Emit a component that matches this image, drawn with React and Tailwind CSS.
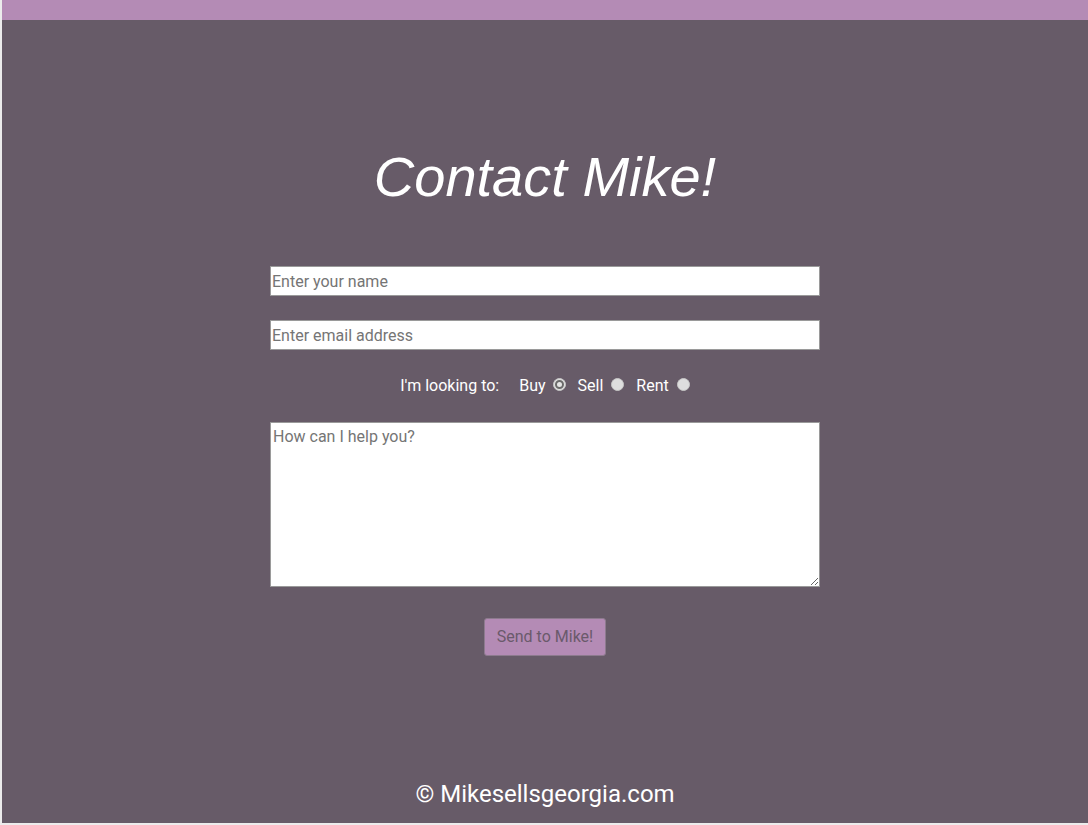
import React from "react";

function Radio({ checked }) {
  return (
    <span className="inline-flex items-center justify-center w-[13px] h-[13px] rounded-full bg-[#dedede] border border-[#c8c8c8]">
      {checked ? (
        <span className="w-[9px] h-[9px] rounded-full border-[2px] border-[#6a6a6a] bg-[#e6e6e6]" />
      ) : null}
    </span>
  );
}

export default function App() {
  return (
    <div className="bg-[#ececec] pl-[2px] pb-[2px]" style={{ fontFamily: "Roboto, 'Noto Sans', sans-serif" }}>
      <div className="bg-[#675b68] min-h-[823px] flex flex-col">
        <div className="h-[20px] bg-[#b48bb5]" />
        <h1
          className="mt-[125px] text-center text-white italic text-[56px] leading-[64px] font-normal"
          style={{ fontFamily: "'Liberation Sans', Arial, sans-serif" }}
        >
          Contact Mike!
        </h1>
        <div className="mt-[57px] flex flex-col items-center">
          <input
            type="text"
            placeholder="Enter your name"
            className="w-[550px] h-[30px] bg-white border border-[#9a9a9a] px-[1px] text-[16px] text-[#333] placeholder:text-[#757575] outline-none"
          />
          <input
            type="text"
            placeholder="Enter email address"
            className="mt-[24px] w-[550px] h-[30px] bg-white border border-[#9a9a9a] px-[1px] text-[16px] text-[#333] placeholder:text-[#757575] outline-none"
          />
          <div className="mt-[24px] h-[24px] flex items-center text-[16px] leading-[24px] text-white">
            <span>I'm looking to:</span>
            <span className="ml-[20px]">Buy</span>
            <span className="ml-[7px] mb-[3px] flex"><Radio checked /></span>
            <span className="ml-[12px]">Sell</span>
            <span className="ml-[8px] mb-[3px] flex"><Radio /></span>
            <span className="ml-[12px]">Rent</span>
            <span className="ml-[8px] mb-[3px] flex"><Radio /></span>
          </div>
          <textarea
            placeholder="How can I help you?"
            className="mt-[24px] w-[550px] h-[165px] bg-white border border-[#9a9a9a] px-[2px] py-[2px] text-[16px] text-[#333] placeholder:text-[#757575] outline-none resize-y"
          />
          <button className="mt-[31px] w-[122px] h-[38px] bg-[#b48bb5] border border-[#8d7b8e] rounded-[3px] text-[16px] text-[#6a5a6b]">
            Send to Mike!
          </button>
        </div>
        <div className="mt-auto pb-[15px] text-center text-white text-[24px] leading-[28px]">
          © Mikesellsgeorgia.com
        </div>
      </div>
    </div>
  );
}
